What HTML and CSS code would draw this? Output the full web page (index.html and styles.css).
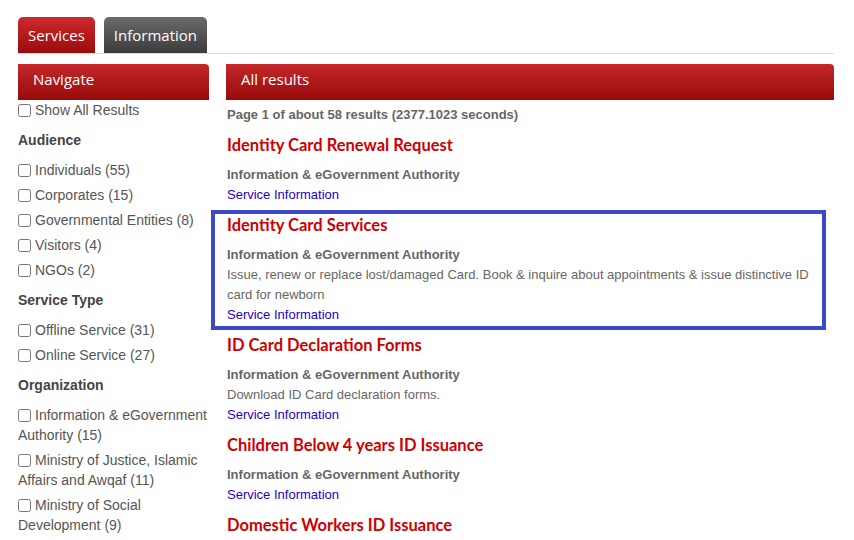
FILE: index.html
```html
<!DOCTYPE html>
<html lang="en">
	<head>
		<meta name="viewport" content="width=device-width, initial-scale=1.0" />
		<title>Services search</title>
		<link rel="stylesheet" href="styles.css">
	</head>
	<body>
		<ul class="tabs">
			<li class="tab -active">Services</li>
			<li class="tab">Information</li>
		</ul>

		<div class="layout">
			<aside class="sidebar">
				<h2 class="bar">Navigate</h2>
				<label class="check"><input type="checkbox" />Show All Results</label>

				<h3 class="group">Audience</h3>
				<label class="check"><input type="checkbox" />Individuals (55)</label>
				<label class="check"><input type="checkbox" />Corporates (15)</label>
				<label class="check"><input type="checkbox" />Governmental Entities (8)</label>
				<label class="check"><input type="checkbox" />Visitors (4)</label>
				<label class="check"><input type="checkbox" />NGOs (2)</label>

				<h3 class="group">Service Type</h3>
				<label class="check"><input type="checkbox" />Offline Service (31)</label>
				<label class="check"><input type="checkbox" />Online Service (27)</label>

				<h3 class="group">Organization</h3>
				<label class="check"><input type="checkbox" />Information &amp; eGovernment Authority (15)</label>
				<label class="check"><input type="checkbox" />Ministry of Justice, Islamic Affairs and Awqaf (11)</label>
				<label class="check"><input type="checkbox" />Ministry of Social Development (9)</label>
			</aside>

			<main class="results">
				<h2 class="bar">All results</h2>
				<p class="summary">Page 1 of about 58 results (2377.1023 seconds)</p>

				<div class="result">
					<h3 class="title">Identity Card Renewal Request</h3>
					<p class="org">Information &amp; eGovernment Authority</p>
					<a class="link" href="#">Service Information</a>
				</div>

				<div class="result -focus">
					<h3 class="title">Identity Card Services</h3>
					<p class="org">Information &amp; eGovernment Authority</p>
					<p class="desc">Issue, renew or replace lost/damaged Card. Book &amp; inquire about appointments &amp; issue distinctive ID card for newborn</p>
					<a class="link" href="#">Service Information</a>
				</div>

				<div class="result">
					<h3 class="title">ID Card Declaration Forms</h3>
					<p class="org">Information &amp; eGovernment Authority</p>
					<p class="desc">Download ID Card declaration forms.</p>
					<a class="link" href="#">Service Information</a>
				</div>

				<div class="result">
					<h3 class="title">Children Below 4 years ID Issuance</h3>
					<p class="org">Information &amp; eGovernment Authority</p>
					<a class="link" href="#">Service Information</a>
				</div>

				<div class="result">
					<h3 class="title">Domestic Workers ID Issuance</h3>
				</div>
			</main>
		</div>
	</body>
</html>
```

FILE: styles.css
```css
html {
	overflow: hidden;
}

body {
	margin: 0;
	padding: 17px 20px 0 18px;
	color: #555;
	background-color: #fff;
	font-family: "Liberation Sans", Arial, sans-serif;
	font-size: 14px;
	line-height: 20px;
}

h2,
h3,
p {
	margin: 0;
}

.tabs {
	display: flex;
	gap: 9px;
	margin: 0;
	padding: 0;
	list-style: none;
	border-bottom: 1px solid #ddd;
}

.tab {
	height: 36px;
	padding: 0 10px;
	border-radius: 5px 5px 0 0;
	color: #fff;
	background: linear-gradient(#6a6a6a, #3c3c3c);
	font-family: "Open Sans", sans-serif;
	font-size: 15px;
	line-height: 36px;
}
.tab.-active {
	background: linear-gradient(#cc2a2e, #9c0b0b);
}

.layout {
	display: flex;
	gap: 17px;
	margin-top: 10px;
}

.bar {
	box-sizing: border-box;
	height: 36px;
	padding: 0 15px 6px;
	border-radius: 0 4px 0 0;
	color: #fff;
	background: linear-gradient(#c4282b, #990a0a);
	font-family: "Open Sans", sans-serif;
	font-size: 15px;
	font-weight: normal;
	line-height: 30px;
}

.sidebar {
	flex: 0 0 191px;
}

.check {
	display: block;
	margin-bottom: 5px;
}

.check input {
	width: 13px;
	height: 13px;
	margin: 0 4px 0 0;
	vertical-align: -2px;
}

.group {
	margin: 10px 0 10px;
	color: #444;
	font-size: 14px;
	line-height: 20px;
}

.results {
	flex: 1;
	font-size: 13px;
}

.summary {
	margin: 5px 0 8px 1px;
	color: #666;
	font-weight: bold;
}

.result {
	position: relative;
	margin-bottom: 8px;
	padding-left: 1px;
}

.result.-focus::after {
	content: "";
	position: absolute;
	top: -3px;
	left: -15px;
	right: 8px;
	bottom: -5px;
	border: 4px solid #3f47c9;
	pointer-events: none;
}

.title {
	color: #c00;
	font-family: Lato, sans-serif;
	font-size: 16.5px;
	font-weight: bold;
	line-height: 24px;
}

.org {
	margin-top: 8px;
	color: #666;
	font-weight: bold;
}

.desc {
	color: #666;
}

.link {
	color: #2200cc;
	text-decoration: none;
}
```
